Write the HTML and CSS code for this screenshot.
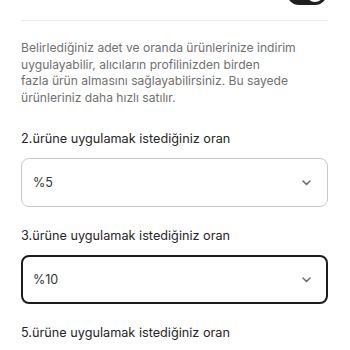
FILE: index.html
```html
<!DOCTYPE html>
<html lang="tr">
<head>
<meta charset="utf-8">
<link rel="stylesheet" href="styles.css">
</head>
<body>
<div class="page">
  <div class="top">
    <div class="toggle"><span class="knob"></span></div>
  </div>
  <div class="divider"></div>
  <p class="desc">Belirlediğiniz adet ve oranda ürünlerinize indirim<br>uygulayabilir, alıcıların profilinizden birden<br>fazla ürün almasını sağlayabilirsiniz. Bu sayede<br>ürünleriniz daha hızlı satılır.</p>

  <div class="field">
    <div class="label">2.ürüne uygulamak istediğiniz oran</div>
    <div class="select">
      <span class="value">%5</span>
      <svg class="chev" width="9" height="6" viewBox="0 0 9 6"><path d="M1 1l3.5 3.5L8 1" fill="none" stroke="#6f6f6f" stroke-width="1.6" stroke-linecap="round" stroke-linejoin="round"/></svg>
    </div>
  </div>

  <div class="field">
    <div class="label">3.ürüne uygulamak istediğiniz oran</div>
    <div class="select active">
      <span class="value">%10</span>
      <svg class="chev" width="9" height="6" viewBox="0 0 9 6"><path d="M1 1l3.5 3.5L8 1" fill="none" stroke="#6f6f6f" stroke-width="1.6" stroke-linecap="round" stroke-linejoin="round"/></svg>
    </div>
  </div>

  <div class="field">
    <div class="label">5.ürüne uygulamak istediğiniz oran</div>
  </div>
</div>
</body>
</html>
```

FILE: styles.css
```css
html, body {
  margin: 0;
  padding: 0;
  background: #ffffff;
}
body {
  font-family: Inter, "Noto Sans", sans-serif;
  color: #222222;
  overflow: hidden;
}
.page {
  padding: 0 22px 0 21px;
}
.top {
  height: 5px;
  display: flex;
  justify-content: flex-end;
}
.toggle {
  margin-top: -19px;
  margin-right: 1px;
  width: 40px;
  height: 24px;
  border-radius: 12px;
  background: #1f1f1f;
  display: flex;
  align-items: center;
  justify-content: flex-end;
  padding: 0 3px;
  box-sizing: border-box;
}
.knob {
  width: 18px;
  height: 18px;
  border-radius: 50%;
  background: #ffffff;
}
.divider {
  margin-top: 15px;
  border-top: 1px solid #ececec;
}
.desc {
  margin: 19px 0 0;
  font-size: 12.1px;
  line-height: 16.6px;
  color: #707070;
}
.field {
  margin-top: 23px;
}
.field + .field {
  margin-top: 19px;
}
.label {
  font-size: 12.7px;
  line-height: 20px;
  color: #262626;
}
.select {
  margin-top: 9px;
  height: 49px;
  box-sizing: border-box;
  border: 1px solid #c9c9c9;
  border-radius: 8px;
  display: flex;
  align-items: center;
  justify-content: space-between;
  padding: 0 16px 0 11px;
}
.select.active {
  border: 2px solid #1c1c1c;
  padding: 0 15px 0 10px;
}
.value {
  font-size: 12.5px;
  color: #333333;
}
.chev {
  display: block;
}
```
